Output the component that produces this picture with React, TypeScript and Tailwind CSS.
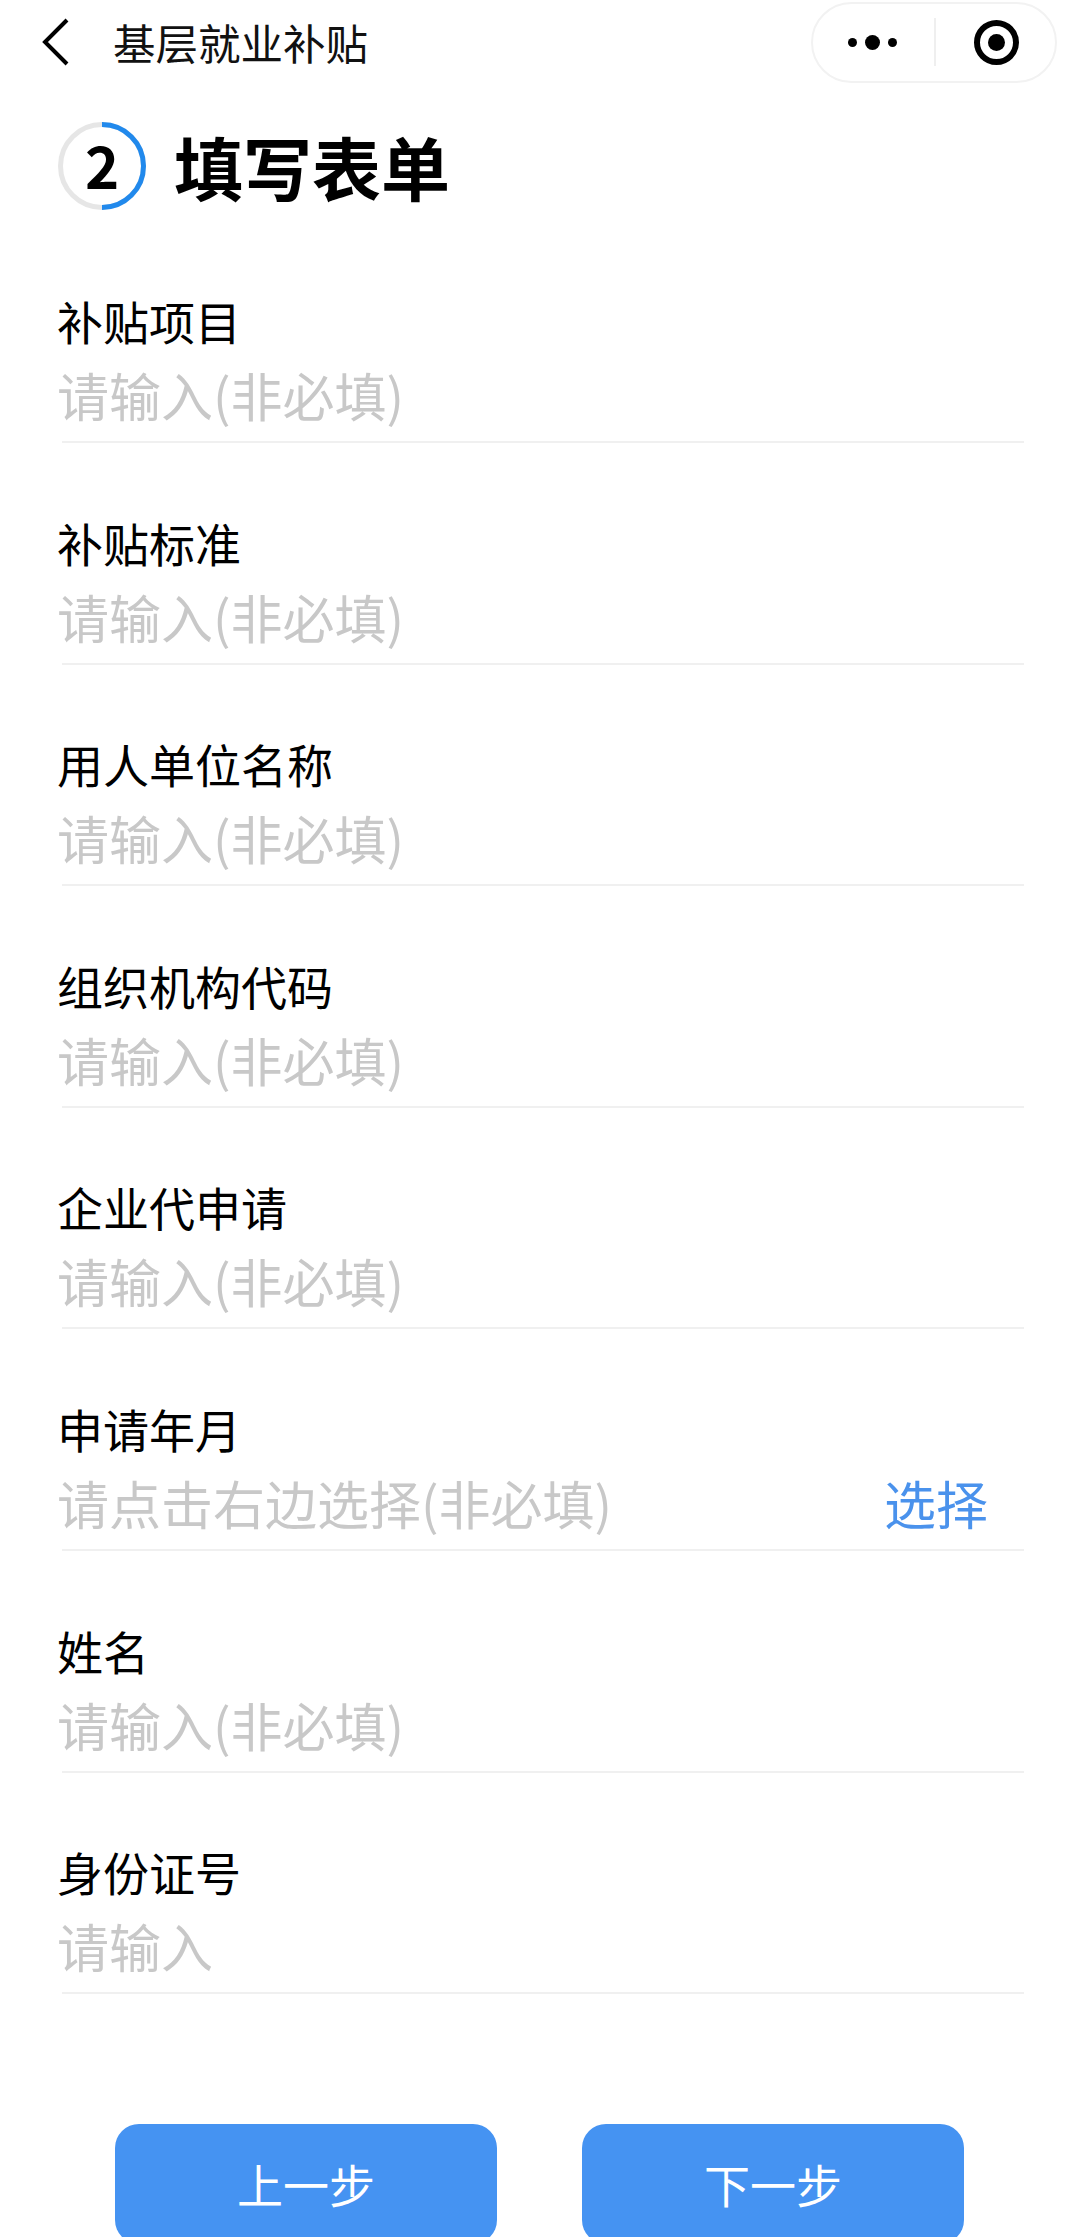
import React from 'react';

const FIELDS = [
  { label: '补贴项目', placeholder: '请输入(非必填)' },
  { label: '补贴标准', placeholder: '请输入(非必填)' },
  { label: '用人单位名称', placeholder: '请输入(非必填)' },
  { label: '组织机构代码', placeholder: '请输入(非必填)' },
  { label: '企业代申请', placeholder: '请输入(非必填)' },
  { label: '申请年月', placeholder: '请点击右边选择(非必填)', action: '选择' },
  { label: '姓名', placeholder: '请输入(非必填)' },
  { label: '身份证号', placeholder: '请输入' },
];

const FONT = "font-['Noto_Sans_CJK_SC','Noto_Sans',sans-serif]";

const Capsule = () => (
  <div className="flex h-[81px] w-[246px] items-center rounded-full border-2 border-[#f2f2f2] bg-white">
    <div className="flex w-[121px] items-center justify-end gap-[8px] pr-[37px]">
      <span className="h-[9px] w-[9px] rounded-full bg-black" />
      <span className="h-[15px] w-[15px] rounded-full bg-black" />
      <span className="h-[9px] w-[9px] rounded-full bg-black" />
    </div>
    <div className="h-[48px] w-[2px] bg-[#efefef]" />
    <div className="flex flex-1 justify-center pl-[1px]">
      <div className="flex h-[45px] w-[45px] items-center justify-center rounded-full border-[6px] border-black">
        <span className="h-[17px] w-[17px] rounded-full bg-black" />
      </div>
    </div>
  </div>
);

const StepRing = () => (
  <div className="relative h-[88px] w-[88px]">
    <svg viewBox="0 0 88 88" className="h-full w-full">
      <circle cx="44" cy="44" r="41.5" fill="none" stroke="#e6e6e6" strokeWidth="5" />
      <path d="M44 2.5 A41.5 41.5 0 0 1 44 85.5" fill="none" stroke="#2189ec" strokeWidth="5" />
    </svg>
    <span className="absolute inset-0 flex items-center justify-center pb-[4px] text-[58px] leading-none font-bold text-black">
      2
    </span>
  </div>
);

export default function App() {
  return (
    <div className={`${FONT} h-[2237px] w-[1077px] overflow-hidden bg-white`}>
      <header className="flex h-[84px] items-center justify-between pr-[20px] pl-[42px]">
        <div className="flex items-center">
          <svg width="28" height="48" viewBox="0 0 28 48" fill="none" className="text-black">
            <path d="M25 2 L3 24 L25 46" stroke="currentColor" strokeWidth="4" />
          </svg>
          <span className="ml-[43px] text-[42.5px] leading-none text-[#111]">基层就业补贴</span>
        </div>
        <Capsule />
      </header>

      <div className="mt-[38px] flex items-center pl-[58px]">
        <StepRing />
        <h1 className="ml-[28px] text-[69px] leading-none font-bold text-black">填写表单</h1>
      </div>

      <div className="mt-[72px] pr-[53px] pl-[57px]">
        {FIELDS.map((field) => (
          <div key={field.label} className="flex h-[221.6px] flex-col">
            <div className="mt-[8px] text-[46px] leading-[60px] text-black">{field.label}</div>
            <div className="mt-[15px] flex h-[60px] items-center justify-between pr-[36px]">
              <span className="text-[52px] leading-[60px] text-[#c8c8c8]">{field.placeholder}</span>
              {field.action && <span className="text-[52px] leading-[60px] text-[#4a92ec]">{field.action}</span>}
            </div>
            <div className="mt-[16px] ml-[5px] h-[2px] bg-[#f0f0f0]" />
          </div>
        ))}
      </div>

      <div className="mt-[69px] flex justify-center gap-[85px] pl-[2px]">
        <button className="h-[120px] w-[382px] rounded-[24px] bg-[#4593f2] text-[46px] text-white">上一步</button>
        <button className="h-[120px] w-[382px] rounded-[24px] bg-[#4593f2] text-[46px] text-white">下一步</button>
      </div>
    </div>
  );
}
